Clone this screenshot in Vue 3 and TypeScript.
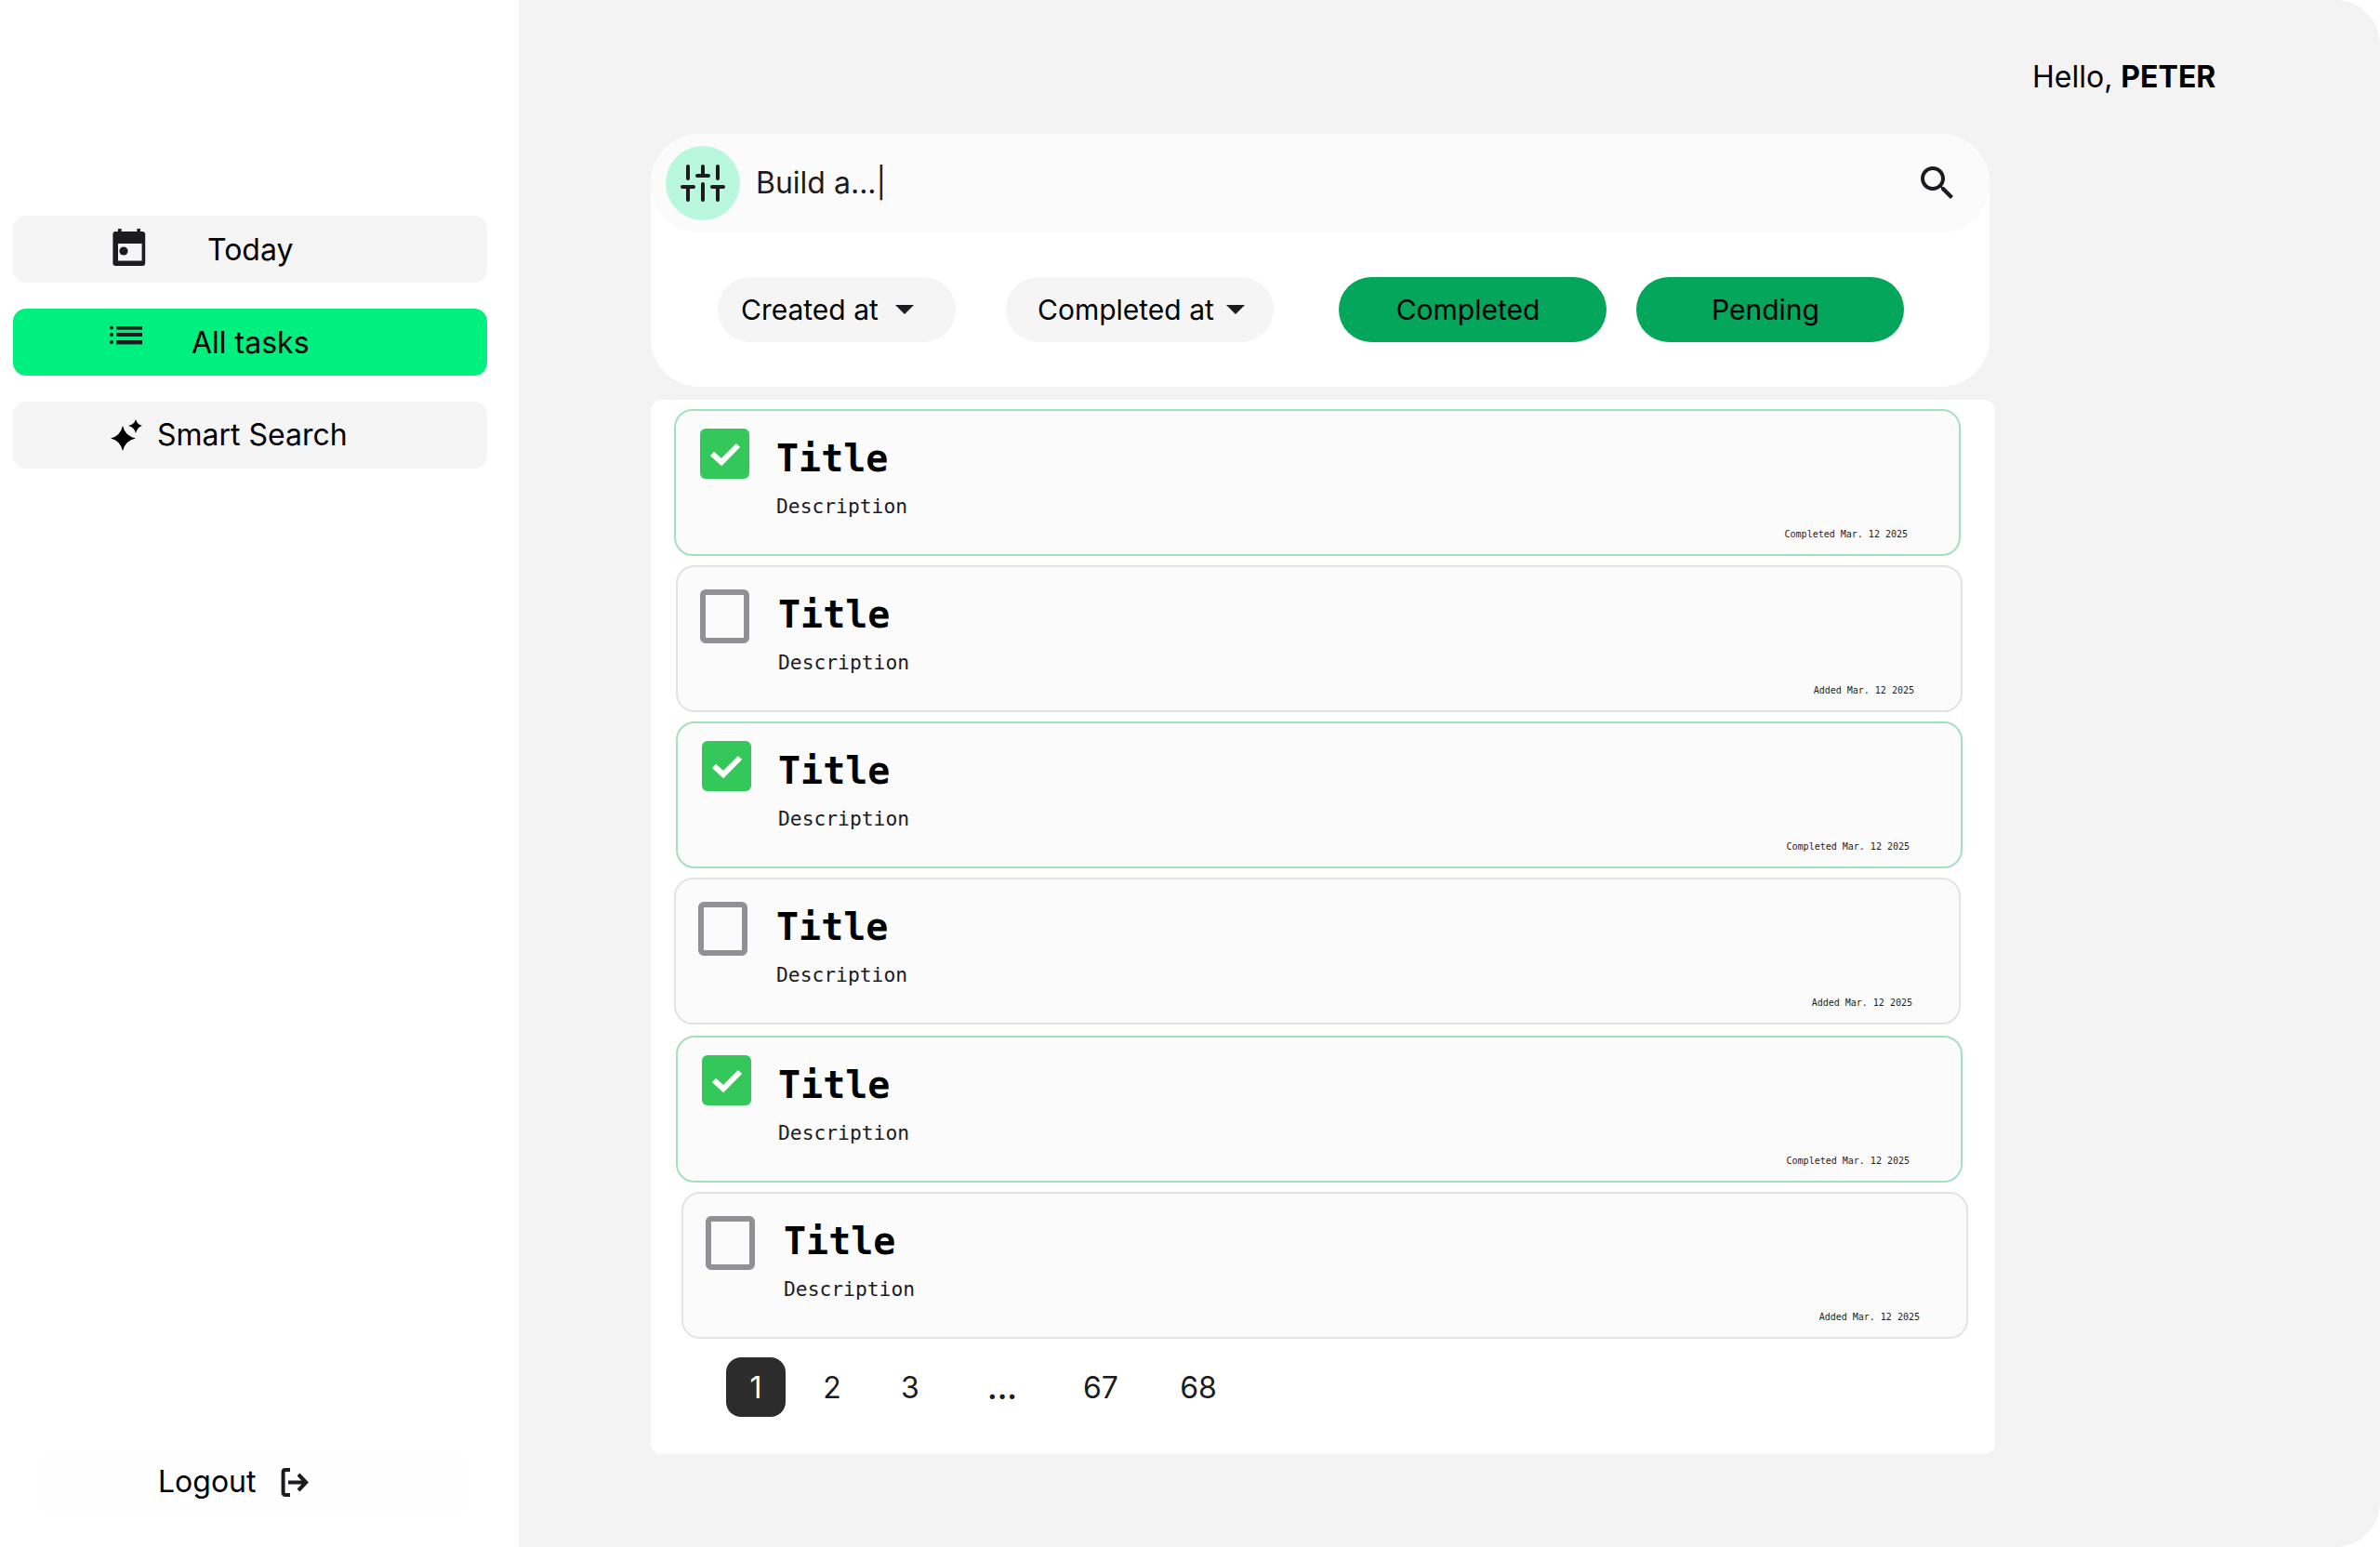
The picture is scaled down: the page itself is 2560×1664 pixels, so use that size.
<script setup lang="ts">
interface Task {
  done: boolean
  date: string
}

const tasks: Task[] = [
  { done: true, date: 'Completed Mar. 12 2025' },
  { done: false, date: 'Added Mar. 12 2025' },
  { done: true, date: 'Completed Mar. 12 2025' },
  { done: false, date: 'Added Mar. 12 2025' },
  { done: true, date: 'Completed Mar. 12 2025' },
  { done: false, date: 'Added Mar. 12 2025' }
]

const pages = [
  { label: '1', width: 64 },
  { label: '2', width: 64 },
  { label: '3', width: 68 },
  { label: '...', width: 94 },
  { label: '67', width: 82 },
  { label: '68', width: 92 }
]
</script>

<template>
  <div class="app">
    <aside class="sidebar">
      <nav class="nav">
        <a class="nav-item nav-today">
          <svg class="icon" viewBox="0 0 24 24" width="48" height="48">
            <path fill="#1d1b20" fill-rule="evenodd" d="M4.5 2.5H6V1h1.8v1.5h8.4V1H18v1.5h1.1c.9 0 1.5.7 1.5 1.5v15.5c0 .9-.6 1.5-1.5 1.5H4.7c-.9 0-1.5-.6-1.5-1.5V4c0-.8.5-1.5 1.3-1.5zM6 9v9.3h12.8V9z" />
            <ellipse cx="9" cy="13" rx="2.3" ry="2.3" fill="#1d1b20" />
          </svg>
          <span>Today</span>
        </a>
        <a class="nav-item nav-all active">
          <svg class="icon" viewBox="0 0 35 21" width="35" height="21">
            <g fill="#1d1b20">
              <circle cx="2" cy="2.5" r="2" />
              <circle cx="2" cy="10" r="2" />
              <circle cx="2" cy="18" r="2" />
              <rect x="7" y="1" width="28" height="3.6" />
              <rect x="7" y="8" width="28" height="4" />
              <rect x="7" y="16" width="28" height="4.4" />
            </g>
          </svg>
          <span>All tasks</span>
        </a>
        <a class="nav-item nav-smart">
          <svg class="icon" viewBox="0 0 35 34" width="35" height="34">
            <path fill="#000" d="M14 7 Q16.5 18 28 20.5 Q16.5 23 14 34 Q11.5 23 1 20.5 Q11.5 18 14 7z" />
            <path fill="#000" d="M28 0 Q29.5 5.5 35 7 Q29.5 8.5 28 15 Q26.5 8.5 20 7 Q26.5 5.5 28 0z" />
          </svg>
          <span>Smart Search</span>
        </a>
      </nav>
      <a class="logout">
        <span>Logout</span>
        <svg viewBox="0 0 30 31" width="30" height="31">
          <path fill="none" stroke="#1d1b20" stroke-width="4" d="M10 2H5Q2.6 2 2.6 4.4V26.6Q2.6 29 5 29H10" />
          <path fill="none" stroke="#1d1b20" stroke-width="4" d="M8 15.5H27M19 7l8.2 8.5L19 24" />
        </svg>
      </a>
    </aside>

    <main class="main">
      <header class="greeting">Hello, <b>PETER</b></header>

      <section class="prompt-card">
        <div class="prompt">
          <span class="prompt-avatar">
            <svg viewBox="0 0 48 40" width="48" height="40">
              <g stroke="#1d1b20" stroke-width="4" stroke-linecap="round" fill="none">
                <path d="M8 2V15M8 24V38M2 24H14" />
                <path d="M24 2V11M24 21V38M18 12H30" />
                <path d="M40 2V15M40 24V38M34 24H46" />
              </g>
            </svg>
          </span>
          <span class="prompt-text">Build a...|</span>
          <svg class="prompt-search" viewBox="0 0 24 24" width="48" height="48">
            <path fill="#1d1b20" d="M15.5 14h-.79l-.28-.27C15.41 12.59 16 11.11 16 9.5 16 5.91 13.09 3 9.5 3S3 5.91 3 9.5 5.91 16 9.5 16c1.61 0 3.09-.59 4.23-1.57l.27.28v.79l5 4.99L20.49 19l-4.99-5zm-6 0C7.01 14 5 11.99 5 9.5S7.01 5 9.5 5 14 7.01 14 9.5 11.99 14 9.5 14z" />
          </svg>
        </div>
        <div class="filters">
          <button class="pill pill-created">Created at <i class="caret"></i></button>
          <button class="pill pill-completed">Completed at <i class="caret"></i></button>
          <button class="pill status">Completed</button>
          <button class="pill status">Pending</button>
        </div>
      </section>

      <section class="panel">
        <ul class="task-list">
          <li v-for="(task, i) in tasks" :key="i" class="task" :class="{ done: task.done }">
            <span class="check">
              <svg v-if="task.done" viewBox="0 0 53 54" width="53" height="54">
                <polyline points="13,27 23,36 41,18" fill="none" stroke="#fff" stroke-width="6" />
              </svg>
            </span>
            <div class="task-body">
              <h4>Title</h4>
              <p>Description</p>
            </div>
            <span class="task-date">{{ task.date }}</span>
          </li>
        </ul>
        <div class="pager">
          <span
            v-for="(page, i) in pages"
            :key="page.label"
            class="page"
            :class="{ current: i === 0, dots: page.label === '...' }"
            :style="{ width: page.width + 'px' }"
          >{{ page.label }}</span>
        </div>
      </section>
    </main>
  </div>
</template>

<style>
html,
body {
  margin: 0;
  background: #fff;
}
</style>

<style scoped>
.app {
  display: flex;
  width: 2560px;
  height: 1664px;
  overflow: hidden;
  background: #fff;
  font-family: Inter, "Liberation Sans", sans-serif;
  font-size: 32px;
  color: #000;
}

.sidebar {
  display: flex;
  flex-direction: column;
  flex: none;
  width: 558px;
  box-sizing: border-box;
  padding: 232px 0 34px;
}

.nav {
  display: flex;
  flex-direction: column;
  gap: 28px;
  margin-left: 14px;
  width: 510px;
}

.nav-item {
  display: flex;
  align-items: center;
  height: 72px;
  border-radius: 14px;
  background: #f5f5f5;
}

.nav-item.active {
  background: #00f07f;
}

.nav-today {
  padding-left: 101px;
}

.nav-today span {
  margin-left: 60px;
}

.nav-all {
  padding-left: 104px;
}

.nav-all .icon {
  margin-top: -16px;
}

.nav-all span {
  margin-left: 53px;
}

.nav-smart {
  padding-left: 104px;
}

.nav-smart span {
  margin-left: 16px;
  margin-top: -2px;
}

.logout {
  display: flex;
  align-items: center;
  gap: 27px;
  margin: auto 0 0 41px;
  width: 462px;
  height: 72px;
  box-sizing: border-box;
  padding-left: 129px;
  border-radius: 14px;
  background: #fefefe;
}

.logout span {
  margin-top: -2px;
}

.main {
  flex: 1;
  box-sizing: border-box;
  padding: 63px 0 0 142px;
  background: #f3f3f3;
  border-radius: 0 48px 48px 0;
}

.greeting {
  height: 39px;
  line-height: 39px;
  margin-left: 1486px;
  white-space: nowrap;
}

.greeting b {
  font-weight: 700;
}

.prompt-card {
  width: 1440px;
  height: 272px;
  margin-top: 42px;
  background: #fff;
  border-radius: 52px;
}

.prompt {
  display: flex;
  align-items: center;
  height: 106px;
  box-sizing: border-box;
  padding: 0 32px 0 16px;
  background: #fbfbfb;
  border-radius: 52px;
}

.prompt-avatar {
  display: flex;
  align-items: center;
  justify-content: center;
  width: 80px;
  height: 80px;
  border-radius: 50%;
  background: #b9f8dc;
}

.prompt-text {
  margin-left: 17px;
  margin-top: -2px;
  color: #1d1b20;
}

.prompt-search {
  margin-left: auto;
}

.filters {
  display: flex;
  margin: 48px 0 0 72px;
}

.pill {
  display: flex;
  align-items: center;
  height: 70px;
  border: none;
  border-radius: 35px;
  background: #f5f5f5;
  font: inherit;
  font-size: 30px;
  color: #000;
  padding: 0;
}

.pill-created {
  width: 256px;
  padding-left: 25px;
  margin-right: 54px;
}

.pill-created .caret {
  margin-left: 18px;
}

.pill-completed {
  width: 288px;
  padding-left: 34px;
  margin-right: 70px;
}

.pill-completed .caret {
  margin-left: 13px;
}

.status {
  justify-content: center;
  width: 288px;
  padding-right: 10px;
  background: #03a65a;
}

.status + .status {
  margin-left: 32px;
}

.caret {
  width: 0;
  height: 0;
  border-left: 10px solid transparent;
  border-right: 10px solid transparent;
  border-top: 10px solid #1d1b20;
}

.panel {
  width: 1446px;
  height: 1134px;
  margin-top: 14px;
  box-sizing: border-box;
  padding-top: 10px;
  background: #fff;
  border-radius: 12px;
}

.task-list {
  list-style: none;
  margin: 0;
  padding: 0;
  display: flex;
  flex-direction: column;
  gap: 10px;
}

.task {
  display: flex;
  width: 1384px;
  height: 158px;
  box-sizing: border-box;
  border: 2px solid #e3e3e3;
  border-radius: 20px;
  background: #fbfbfb;
}

.task.done {
  border-color: #a3dfc1;
}

.task:nth-child(1),
.task:nth-child(4) {
  margin-left: 25px;
}

.task:nth-child(2),
.task:nth-child(3),
.task:nth-child(5) {
  margin-left: 27px;
}

.task:nth-child(5) {
  margin-top: 2px;
}

.task:nth-child(6) {
  margin-left: 33px;
}

.check {
  flex: none;
  width: 53px;
  height: 58px;
  box-sizing: border-box;
  margin: 24px 31px 0 24px;
  border: 6px solid #938f96;
  border-radius: 6px;
}

.task.done .check {
  height: 54px;
  margin-top: 19px;
  margin-left: 26px;
  margin-right: 29px;
  border: none;
  background: #34c759;
}

.check svg {
  display: block;
}

.task-body {
  font-family: "DejaVu Sans Mono", "Liberation Mono", monospace;
}

.task-body h4 {
  margin: 29px 0 0;
  font-size: 40px;
  line-height: 44px;
  font-weight: 700;
}

.task-body p {
  margin: 17px 0 0;
  font-size: 21.3px;
  line-height: 26px;
  color: #1d1b20;
}

.task-date {
  margin-left: auto;
  margin-right: 50px;
  margin-bottom: 15px;
  align-self: flex-end;
  font-family: "DejaVu Sans Mono", "Liberation Mono", monospace;
  font-size: 10px;
  line-height: 13px;
  color: #1d1b20;
}

.task.done .task-date {
  margin-right: 55px;
}

.pager {
  display: flex;
  gap: 18px;
  margin: 20px 0 0 81px;
}

.page {
  display: flex;
  align-items: center;
  justify-content: center;
  height: 64px;
  border-radius: 16px;
  color: #1d1b20;
}

.page.current {
  background: #2c2c2c;
  color: #fff;
}

.page.dots {
  font-weight: 700;
  padding-top: 3px;
  box-sizing: border-box;
}
</style>
